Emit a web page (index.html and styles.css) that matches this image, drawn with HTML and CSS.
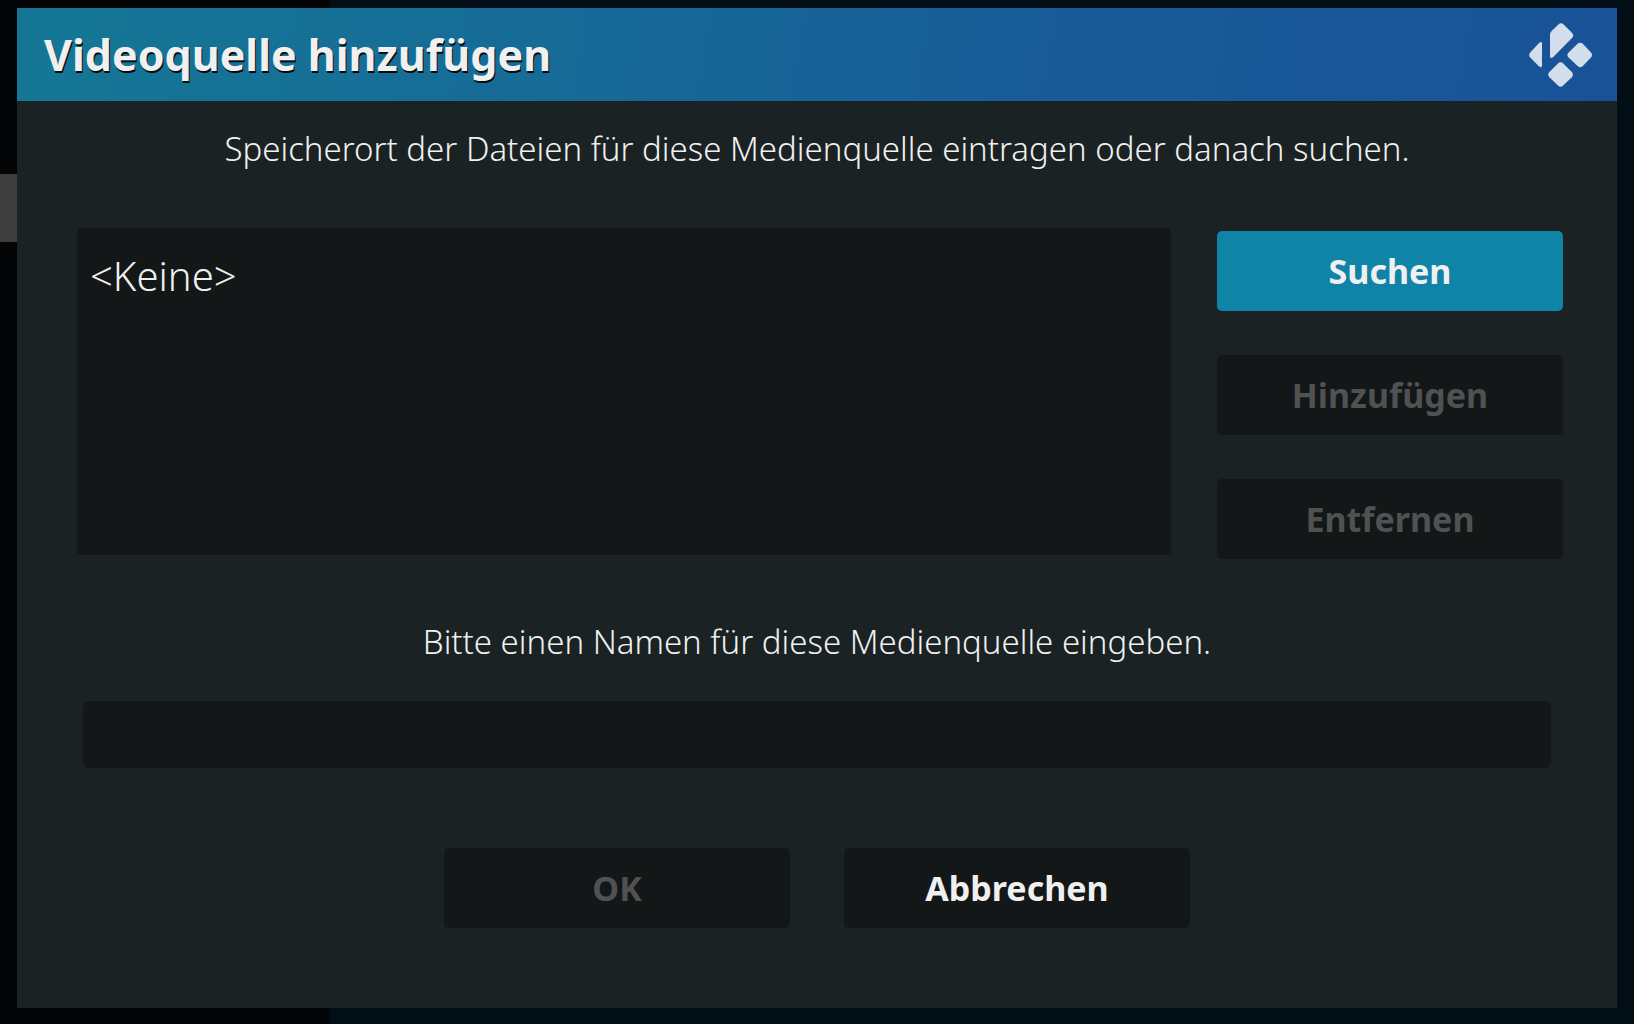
FILE: index.html
```html
<!DOCTYPE html>
<html lang="de">
<head>
    <meta charset="UTF-8">
    <meta name="viewport" content="width=device-width, initial-scale=1.0">
    <title>Videoquelle hinzufügen</title>
    <link rel="stylesheet" href="styles.css">
</head>
<body>
    <div class="menu-focus"></div>

    <form class="dialog">
        <header class="dialog-header">
            <h1>Videoquelle hinzufügen</h1>
            <svg class="logo" viewBox="0 0 64 64" fill="#d2deeb" aria-hidden="true">
                <path d="M9.6 20.4 Q13 17.6 13 20.4 V42.6 Q13 45.8 9.6 43 L1.2 34.4 Q-.8 31.9 1.2 29.4 Z"/>
                <path d="M21 11.6 Q21 9.6 22.6 8 L29.4 1.4 Q32 -.8 34.6 1.4 L43.2 10 Q45.2 12.4 43.2 14.8 L24 34.2 Q21 36.4 21 32.8 Z"/>
                <path d="M48.6 20.8 Q51.2 18.6 53.8 20.8 L62 29.4 Q64 31.9 62 34.4 L53.8 43 Q51.2 45.4 48.6 43 L39.6 34.4 Q37.2 31.9 39.6 29.4 Z"/>
                <path d="M29 40.4 Q31.6 38.2 34.2 40.4 L42.8 49 Q45 51.6 42.8 54.2 L34.2 62.6 Q31.6 65 29 62.6 L20.4 54.2 Q18 51.6 20.4 49 Z"/>
            </svg>
        </header>

        <!-- Speicherort -->
        <p class="label">Speicherort der Dateien für diese Medienquelle eintragen oder danach suchen.</p>
        <div class="paths">
            <ul class="path-list">
                <li>&lt;Keine&gt;</li>
            </ul>
            <div class="path-buttons">
                <button type="button" class="focused">Suchen</button>
                <button type="button" disabled>Hinzufügen</button>
                <button type="button" disabled>Entfernen</button>
            </div>
        </div>

        <!-- Name -->
        <label class="label" for="sourceName">Bitte einen Namen für diese Medienquelle eingeben.</label>
        <input type="text" id="sourceName" class="name-input">

        <div class="actions">
            <button type="submit" disabled>OK</button>
            <button type="button">Abbrechen</button>
        </div>
    </form>
</body>
</html>
```
FILE: styles.css
```css
* {
    box-sizing: border-box;
}
body {
    margin: 0;
    min-height: 100vh;
    padding: 8px 17px 16px;
    display: flex;
    font-family: "Noto Sans", "Open Sans", sans-serif;
    color: #f0f0f0;
    background: linear-gradient(to right, #040507 329px, #010e15 330px);
}
.menu-focus {
    position: absolute;
    left: 0;
    top: 174px;
    width: 40px;
    height: 68px;
    background-color: #3e3e3e;
}
.dialog {
    position: relative;
    flex: 1;
    display: flex;
    flex-direction: column;
    background-color: #1b2223;
}
.dialog-header {
    display: flex;
    align-items: center;
    justify-content: space-between;
    height: 93px;
    padding: 0 24px 0 27px;
    background: linear-gradient(100deg, #157795, #166a97 35%, #185b98 65%, #195297);
}
h1 {
    margin: 0;
    font-size: 43px;
    font-weight: bold;
    text-shadow: 1px 2px 0 #050a0c;
}
.logo {
    width: 64px;
    height: 64px;
}
.label {
    display: block;
    margin: 25px 0 0;
    font-size: 33px;
    line-height: 46px;
    font-weight: 300;
    text-align: center;
}
.paths {
    display: flex;
    gap: 46px;
    margin: 56px 54px 35px 60px;
}
.path-list {
    flex: 1;
    height: 327px;
    margin: 0;
    padding: 20px 13px;
    list-style: none;
    font-size: 40px;
    line-height: 55px;
    font-weight: 300;
    border-radius: 5px;
    background-color: #141718;
}
.path-buttons {
    display: flex;
    flex-direction: column;
    gap: 44px;
    padding-top: 3px;
}
button {
    width: 346px;
    height: 80px;
    padding: 0;
    border: none;
    border-radius: 5px;
    font-family: inherit;
    font-size: 34px;
    font-weight: bold;
    color: #f0f0f0;
    background-color: #141718;
    cursor: pointer;
}
button:disabled {
    color: #505153;
    cursor: default;
}
button.focused {
    background-color: #1084a7;
}
.name-input {
    height: 67px;
    margin: 36px 66px 0;
    padding: 0 14px;
    border: none;
    border-radius: 6px;
    outline: none;
    font-family: inherit;
    font-size: 33px;
    font-weight: 300;
    color: #f0f0f0;
    background-color: #141718;
}
.actions {
    display: flex;
    justify-content: center;
    gap: 54px;
    margin: 80px 0;
}
```
